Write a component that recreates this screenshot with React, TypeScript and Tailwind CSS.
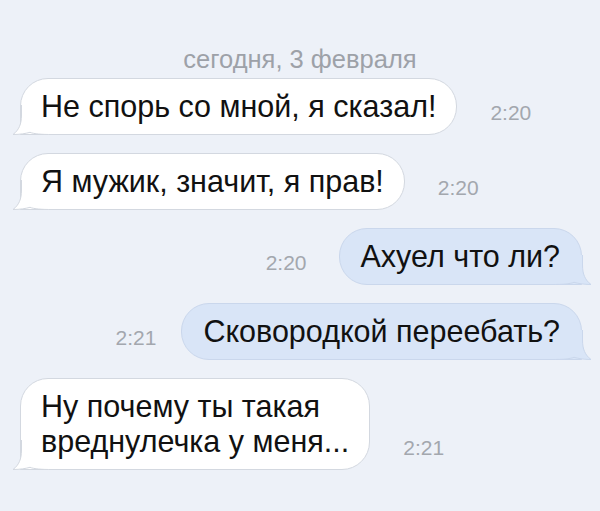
import React from "react";

function InTail() {
  return (
    <svg
      className="absolute left-[-9px] bottom-[-1px]"
      width="40"
      height="30"
      viewBox="0 0 40 30"
    >
      <path
        d="M9.5 0 L9.5 10 C9.5 19 7 25 1 29.5 C8 29.5 14 28.5 18 27.3 C22 29 30 29.5 40 29.5 L40 0 Z"
        fill="#ffffff"
      />
      <path
        d="M9.5 0 L9.5 10 C9.5 19 7 25 1 29.5 C8 29.5 14 28.5 18 27.3 C22 29 30 29.5 40 29.5"
        fill="none"
        stroke="#d3d8e0"
        strokeWidth="1"
      />
    </svg>
  );
}

function OutTail() {
  return (
    <svg
      className="absolute right-[-11px] bottom-[-1px]"
      width="40"
      height="30"
      viewBox="0 0 40 30"
    >
      <path
        d="M30.5 0 L30.5 10 C30.5 19 33 25 39 29.5 C32 29.5 26 28.5 22 27.3 C18 29 10 29.5 0 29.5 L0 0 Z"
        fill="#d9e5f7"
      />
      <path
        d="M30.5 0 L30.5 10 C30.5 19 33 25 39 29.5 C32 29.5 26 28.5 22 27.3 C18 29 10 29.5 0 29.5"
        fill="none"
        stroke="#cad7ec"
        strokeWidth="1"
      />
    </svg>
  );
}

function Incoming({ lines, time }: { lines: string[]; time: string }) {
  return (
    <div className="flex items-end pl-[20px]">
      <div className="relative rounded-[28px] rounded-bl-none border border-[#d3d8e0] bg-white px-[20px] py-[10px] text-[30.5px] leading-[35px] text-[#111111]">
        <InTail />
        <div className="relative z-10">
          {lines.map((l, i) => (
            <div key={i}>{l}</div>
          ))}
        </div>
      </div>
      <div className="ml-[33px] mb-[10px] text-[21px] leading-[24px] text-[#a3a7ae]">
        {time}
      </div>
    </div>
  );
}

function Outgoing({
  text,
  time,
  gap,
}: {
  text: string;
  time: string;
  gap: "wide" | "narrow";
}) {
  return (
    <div className="flex items-end justify-end pr-[18px]">
      <div
        className={
          gap === "wide"
            ? "mr-[32px] mb-[10px] text-[21px] leading-[24px] text-[#a3a7ae]"
            : "mr-[25px] mb-[10px] text-[21px] leading-[24px] text-[#a3a7ae]"
        }
      >
        {time}
      </div>
      <div className="relative rounded-[28px] rounded-br-none border border-[#cad7ec] bg-[#d9e5f7] px-[21px] py-[10px] text-[30.5px] leading-[35px] text-[#111111]">
        <OutTail />
        <div className="relative z-10">{text}</div>
      </div>
    </div>
  );
}

export default function App() {
  return (
    <div className="w-[600px] h-[511px] overflow-hidden bg-[#edf1f8] font-['Liberation_Sans',Arial,sans-serif]">
      <div className="pt-[45px] text-center text-[25.5px] leading-[28px] text-[#9da1a8]">
        сегодня, 3 февраля
      </div>
      <div className="mt-[5px] flex flex-col gap-[18px]">
        <Incoming lines={["Не спорь со мной, я сказал!"]} time="2:20" />
        <Incoming lines={["Я мужик, значит, я прав!"]} time="2:20" />
        <Outgoing text="Ахуел что ли?" time="2:20" gap="wide" />
        <Outgoing text="Сковородкой переебать?" time="2:21" gap="narrow" />
        <Incoming
          lines={["Ну почему ты такая", "вреднулечка у меня..."]}
          time="2:21"
        />
      </div>
    </div>
  );
}
